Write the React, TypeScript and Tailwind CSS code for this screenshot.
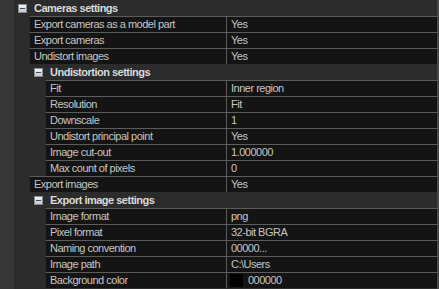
import React from "react";

type Item = { kind: "item"; level: 1 | 2; label: string; value: string; swatch?: boolean };
type Header = { kind: "header"; level: 1 | 2; label: string };
type Row = Item | Header;

const rows: Row[] = [
  { kind: "header", level: 1, label: "Cameras settings" },
  { kind: "item", level: 1, label: "Export cameras as a model part", value: "Yes" },
  { kind: "item", level: 1, label: "Export cameras", value: "Yes" },
  { kind: "item", level: 1, label: "Undistort images", value: "Yes" },
  { kind: "header", level: 2, label: "Undistortion settings" },
  { kind: "item", level: 2, label: "Fit", value: "Inner region" },
  { kind: "item", level: 2, label: "Resolution", value: "Fit" },
  { kind: "item", level: 2, label: "Downscale", value: "1" },
  { kind: "item", level: 2, label: "Undistort principal point", value: "Yes" },
  { kind: "item", level: 2, label: "Image cut-out", value: "1.000000" },
  { kind: "item", level: 2, label: "Max count of pixels", value: "0" },
  { kind: "item", level: 1, label: "Export images", value: "Yes" },
  { kind: "header", level: 2, label: "Export image settings" },
  { kind: "item", level: 2, label: "Image format", value: "png" },
  { kind: "item", level: 2, label: "Pixel format", value: "32-bit BGRA" },
  { kind: "item", level: 2, label: "Naming convention", value: "00000..." },
  { kind: "item", level: 2, label: "Image path", value: "C:\\Users" },
  { kind: "item", level: 2, label: "Background color", value: "000000", swatch: true },
];

function MinusBox() {
  return (
    <div className="w-[9px] h-[9px] border border-[#8a8a8a] bg-gradient-to-b from-[#f4f4f4] to-[#c8c8c8] flex items-center justify-center">
      <div className="w-[5px] h-[1px] bg-[#2a4c9c]" />
    </div>
  );
}

export default function App() {
  return (
    <div
      className="flex w-[439px] h-[289px] overflow-hidden bg-[#2b2b2b] text-[11px] leading-[15px] tracking-[-0.5px]"
      style={{ fontFamily: "'Liberation Sans', Arial, sans-serif" }}
    >
      <div className="w-[14px] bg-[#363636] shrink-0" />
      <div className="flex-1 flex flex-col">
        {rows.map((r, i) =>
          r.kind === "header" ? (
            <div
              key={i}
              className={`h-[16px] flex items-center shrink-0 ${r.level === 1 ? "pl-[4px]" : "pl-[20px]"}`}
            >
              <MinusBox />
              <span className="ml-[7px] font-bold text-[#dadada]">{r.label}</span>
            </div>
          ) : (
            <div
              key={i}
              className={`h-[16px] shrink-0 flex border-t border-[#5c5c5c] bg-[#141414] ${r.level === 1 ? "ml-[16px]" : "ml-[32px]"}`}
            >
              <div
                className={`${r.level === 1 ? "w-[196px]" : "w-[180px]"} shrink-0 pl-[4px] text-[#c6c6c6] whitespace-nowrap overflow-hidden`}
              >
                {r.label}
              </div>
              <div className="flex-1 border-l border-[#5c5c5c] pl-[4px] text-[#c6c6c6] flex items-center whitespace-nowrap">
                {r.swatch ? (
                  <>
                    <div className="w-[13px] h-[13px] bg-black mr-[5px] -ml-[1px]" />
                    <span>{r.value}</span>
                  </>
                ) : (
                  r.value
                )}
              </div>
            </div>
          )
        )}
      </div>
      <div className="w-[2px] bg-[#4a4a4a] shrink-0" />
    </div>
  );
}
